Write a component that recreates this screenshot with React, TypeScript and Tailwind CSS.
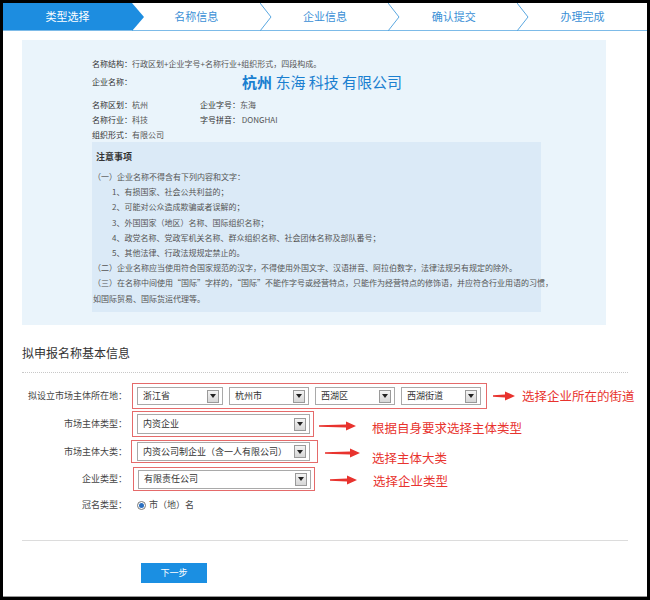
import React from "react";

const steps = ["类型选择", "名称信息", "企业信息", "确认提交", "办理完成"];

function StepBar() {
  return (
    <div className="flex h-[28px] border-b border-[#7dbbe8]">
      {steps.map((s, i) => (
        <div
          key={s}
          className={
            i === 0
              ? "relative flex w-[129px] items-center justify-center bg-[#1d8de0] text-[11px] text-white"
              : "relative flex w-[129px] items-center justify-center text-[11px] text-[#3a8fd6]"
          }
        >
          {s}
          {i === 0 && (
            <svg className="absolute right-[-12px] top-0 z-10" width="12" height="28" viewBox="0 0 12 28">
              <polygon points="0,0 12,14 0,28" fill="#1d8de0" />
            </svg>
          )}
          {i > 0 && i < 4 && (
            <svg className="absolute right-[-11px] top-0 z-10" width="12" height="28" viewBox="0 0 12 28">
              <polyline points="0,0 11,14 0,28" fill="none" stroke="#5aa7e0" strokeWidth="1" />
            </svg>
          )}
        </div>
      ))}
    </div>
  );
}

function Select({ value, w, h = 18 }: { value: string; w: number; h?: number }) {
  return (
    <div
      className="flex shrink-0 items-center justify-between border border-[#a9a9a9] bg-white pl-[5px] pr-[3px] text-[9px] text-[#333]"
      style={{ width: w, height: h }}
    >
      <span className="whitespace-nowrap">{value}</span>
      <span className="flex h-[13px] w-[12px] items-center justify-center border border-[#9a9a9a] bg-gradient-to-b from-[#f4f4f4] to-[#d6d6d6]">
        <svg width="6" height="4" viewBox="0 0 6 4">
          <polygon points="0,0 6,0 3,4" fill="#222" />
        </svg>
      </span>
    </div>
  );
}

function Arrow({ len }: { len: number }) {
  return (
    <svg width={len} height="10" viewBox={`0 0 ${len} 10`}>
      <polygon points={`0,4.2 ${len - 10},3.4 ${len - 10},0.5 ${len},5 ${len - 10},9.5 ${len - 10},6.6 0,5.8`} fill="#e8332e" />
    </svg>
  );
}

function Label({ children }: { children: React.ReactNode }) {
  return <div className="w-[105px] shrink-0 text-right text-[9px] text-[#444]">{children}</div>;
}

function Hint({ children, className }: { children: React.ReactNode; className: string }) {
  return <div className={`shrink-0 whitespace-nowrap text-[12.5px] text-[#e8332e] ${className}`}>{children}</div>;
}

const notes = [
  { t: "（一）企业名称不得含有下列内容和文字：", indent: false },
  { t: "1、有损国家、社会公共利益的；", indent: true },
  { t: "2、可能对公众造成欺骗或者误解的；", indent: true },
  { t: "3、外国国家（地区）名称、国际组织名称；", indent: true },
  { t: "4、政党名称、党政军机关名称、群众组织名称、社会团体名称及部队番号；", indent: true },
  { t: "5、其他法律、行政法规规定禁止的。", indent: true },
  { t: "（二）企业名称应当使用符合国家规范的汉字，不得使用外国文字、汉语拼音、阿拉伯数字，法律法规另有规定的除外。", indent: false },
  { t: "（三）在名称中间使用“国际”字样的，“国际”不能作字号或经营特点，只能作为经营特点的修饰语，并应符合行业用语的习惯，", indent: false },
  { t: "如国际贸易、国际货运代理等。", indent: false },
];

export default function App() {
  return (
    <div className="h-[600px] w-[650px] bg-black p-[3px] font-['Noto_Sans_CJK_SC','Noto_Sans',sans-serif]">
      <div className="h-full border-b border-[#999] bg-white">
        <StepBar />
        <div className="px-[19px]">
          {/* name preview box */}
          <div className="mt-[9px] h-[285px] w-[584px] bg-[#eaf4fb] pl-[70px] pt-[17px] text-[8px]">
            <div className="h-[14px] leading-[14px] text-[#555]">
              <span className="text-[#333]">名称结构：</span>行政区划+企业字号+名称行业+组织形式，四段构成。
            </div>
            <div className="mt-[1px] flex h-[20px] items-center">
              <span className="w-[150px] text-[#333]">企业名称：</span>
              <span className="text-[15px] text-[#1a7fd0]">
                <b>杭州</b> 东海 科技 有限公司
              </span>
            </div>
            <div className="mt-[5px] flex h-[15px] items-center text-[#555]">
              <span className="w-[108px]"><span className="text-[#333]">名称区划：</span>杭州</span>
              <span><span className="text-[#333]">企业字号：</span>东海</span>
            </div>
            <div className="flex h-[15px] items-center text-[#555]">
              <span className="w-[108px]"><span className="text-[#333]">名称行业：</span>科技</span>
              <span><span className="text-[#333]">字号拼音：</span> DONGHAI</span>
            </div>
            <div className="flex h-[15px] items-center text-[#555]">
              <span><span className="text-[#333]">组织形式：</span>有限公司</span>
            </div>
            {/* notes */}
            <div className="h-[170px] w-[449px] bg-[#dbeaf7] pl-[1px] pt-[8px]">
              <div className="h-[14px] pl-[3px] text-[9px] font-bold leading-[14px] text-[#333]">注意事项</div>
              <div className="mt-[5px] text-[#555]">
                {notes.map((n) => (
                  <div
                    key={n.t}
                    className={n.indent ? "h-[15.2px] whitespace-nowrap pl-[19px] leading-[15.2px]" : "h-[15.2px] whitespace-nowrap leading-[15.2px]"}
                  >
                    {n.t}
                  </div>
                ))}
              </div>
            </div>
          </div>

          {/* form */}
          <div className="mt-[20px] h-[16px] text-[12px] leading-[16px] text-[#333]">拟申报名称基本信息</div>
          <div className="mt-[11px] border-t border-dotted border-[#c8c8c8]" />

          <div className="mt-[10px] flex h-[26px] items-center">
            <Label>拟设立市场主体所在地：</Label>
            <div className="ml-[5px] flex h-[26px] w-[355px] shrink-0 items-center gap-[6px] border border-[#e56a6a] pl-[4px]">
              <Select value="浙江省" w={86} />
              <Select value="杭州市" w={80} />
              <Select value="西湖区" w={80} />
              <Select value="西湖街道" w={80} />
            </div>
            <div className="ml-[6px] shrink-0"><Arrow len={22} /></div>
            <Hint className="ml-[7px]">选择企业所在的街道</Hint>
          </div>

          <div className="mt-[2px] flex h-[26px] items-center">
            <Label>市场主体类型：</Label>
            <div className="ml-[5px] flex h-[26px] w-[182px] shrink-0 items-center border border-[#e56a6a] pl-[4px]">
              <Select value="内资企业" w={173} h={20} />
            </div>
            <div className="ml-[5px] mt-[4px] shrink-0"><Arrow len={37} /></div>
            <Hint className="ml-[16px] mt-[8px]">根据自身要求选择主体类型</Hint>
          </div>

          <div className="mt-[3px] flex h-[23px] items-center">
            <Label>市场主体大类：</Label>
            <div className="ml-[4px] flex h-[23px] w-[187px] shrink-0 items-center border border-[#e56a6a] pl-[5px]">
              <Select value="内资公司制企业（含一人有限公司）" w={173} h={19} />
            </div>
            <div className="ml-[7px] mt-[2px] shrink-0"><Arrow len={35} /></div>
            <Hint className="ml-[12px] mt-[14px]">选择主体大类</Hint>
          </div>

          <div className="mt-[4px] flex h-[24px] items-center">
            <Label>企业类型：</Label>
            <div className="ml-[6px] flex h-[24px] w-[182px] shrink-0 items-center border border-[#e56a6a] pl-[4px]">
              <Select value="有限责任公司" w={173} h={19} />
            </div>
            <div className="ml-[15px] mt-[2px] shrink-0"><Arrow len={27} /></div>
            <Hint className="ml-[16px] mt-[4px]">选择企业类型</Hint>
          </div>

          <div className="mt-[7px] flex h-[14px] items-center">
            <Label>冠名类型：</Label>
            <div className="ml-[10px] flex items-center gap-[3px] text-[9px] text-[#444]">
              <span className="flex h-[9px] w-[9px] items-center justify-center rounded-full border border-[#777] bg-white">
                <span className="h-[5px] w-[5px] rounded-full bg-[#2a6fc0]" />
              </span>
              市（地）名
            </div>
          </div>

          <div className="mt-[28px] border-t border-[#dcdcdc]" />

          <button className="ml-[119px] mt-[22px] h-[20px] w-[66px] bg-[#1b8fe2] text-[9px] text-white">下一步</button>
        </div>
      </div>
    </div>
  );
}
